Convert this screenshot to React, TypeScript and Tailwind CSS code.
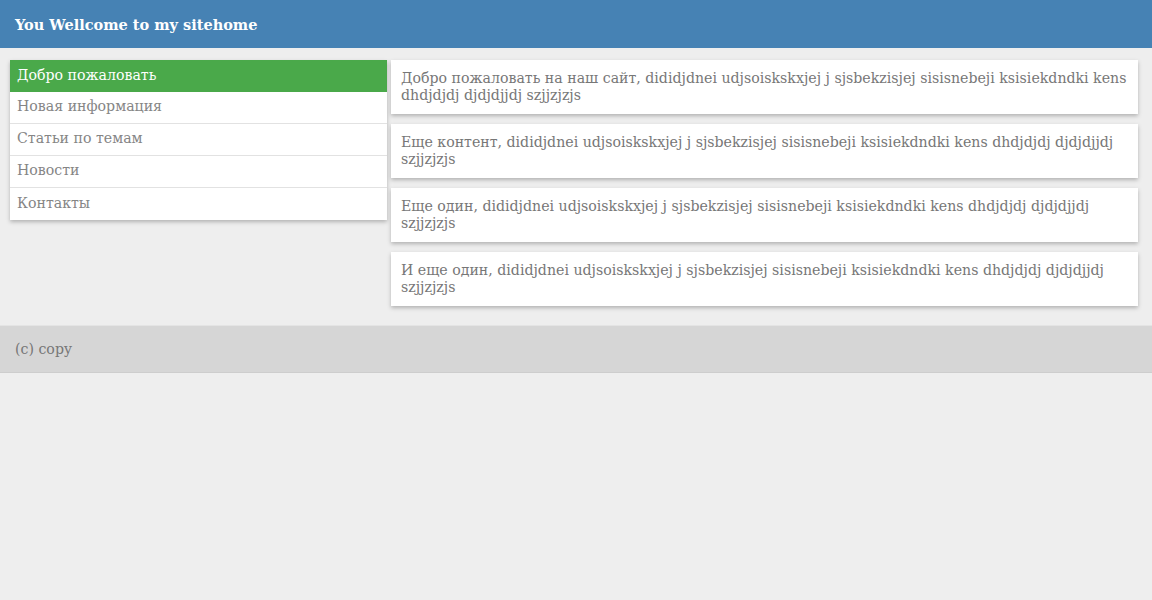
export default function App() {
  const items = ["Добро пожаловать", "Новая информация", "Статьи по темам", "Новости", "Контакты"];
  const cards = [
    "Добро пожаловать на наш сайт, dididjdnei udjsoiskskxjej j sjsbekzisjej sisisnebeji ksisiekdndki kens dhdjdjdj djdjdjjdj szjjzjzjs",
    "Еще контент, dididjdnei udjsoiskskxjej j sjsbekzisjej sisisnebeji ksisiekdndki kens dhdjdjdj djdjdjjdj szjjzjzjs",
    "Еще один, dididjdnei udjsoiskskxjej j sjsbekzisjej sisisnebeji ksisiekdndki kens dhdjdjdj djdjdjjdj szjjzjzjs",
    "И еще один, dididjdnei udjsoiskskxjej j sjsbekzisjej sisisnebeji ksisiekdndki kens dhdjdjdj djdjdjjdj szjjzjzjs",
  ];
  return (
    <div className="min-h-[600px] bg-[#eeeeee] text-[14.15px] leading-[17px] font-['DejaVu_Serif',serif]">
      <header className="h-[48px] bg-[#4682b4] flex items-center px-[15px]">
        <h1 className="text-white font-bold text-[14.5px]">You Wellcome to my sitehome</h1>
      </header>
      <div className="flex items-start pt-[12px] pl-[10px] pb-[19px]">
        <nav className="w-[377px] bg-white shadow-[0_2px_4px_rgba(0,0,0,0.25)]">
          {items.map((t, i) => (
            <div
              key={t}
              className={
                i === 0
                  ? "h-[32px] flex items-center px-[7px] pb-[2px] bg-[#4aa94a] text-white"
                  : i === items.length - 1
                  ? "h-[32px] flex items-center px-[7px] pb-[2px] text-[#858585]"
                  : "h-[32px] flex items-center px-[7px] pb-[2px] text-[#858585] border-b border-[#e2e2e2]"
              }
            >
              {t}
            </div>
          ))}
        </nav>
        <main className="ml-[4px] w-[747px] flex flex-col gap-[10px]">
          {cards.map((c) => (
            <div key={c} className="bg-white px-[10px] py-[10px] h-[54px] text-[#777777] shadow-[0_2px_4px_rgba(0,0,0,0.25)]">
              {c}
            </div>
          ))}
        </main>
      </div>
      <footer className="h-[48px] bg-[#d6d6d6] flex items-center px-[15px] text-[#777777] border-t border-[#e4e4e4] border-b border-b-[#cdcdcd]">
        (c) copy
      </footer>
    </div>
  );
}
